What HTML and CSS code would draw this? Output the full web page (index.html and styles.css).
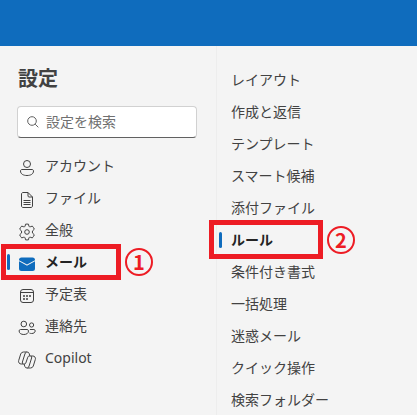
FILE: index.html
```html
<!DOCTYPE html>
<html lang="ja">
<head>
  <meta charset="UTF-8">
  <meta name="viewport" content="width=device-width, initial-scale=1">
  <title>設定</title>
  <link rel="stylesheet" href="styles.css">
</head>
<body>

  <header class="topbar"></header>

  <div class="settings">
    <aside class="sidebar">
      <h1>設定</h1>

      <label class="search">
        <svg viewBox="0 0 12 12" aria-hidden="true"><circle cx="5" cy="5" r="4.3"/><path d="M8.2 8.2 11.3 11.3"/></svg>
        <input type="search" placeholder="設定を検索" aria-label="設定を検索">
      </label>

      <nav class="menu">
        <a href="#account">
          <svg viewBox="0 0 20 20"><circle cx="10" cy="6" r="3.5"/><path d="M5 11.500h10c.9 0 1.500.6 1.500 1.500 0 3-2.800 4.500-6.500 4.500S3.500 16 3.500 13c0-.9.6-1.500 1.500-1.500z"/></svg>
          <span>アカウント</span>
        </a>
        <a href="#files">
          <svg viewBox="0 0 20 20"><path d="M6 2.500h5l4.500 4.500v9c0 .8-.7 1.500-1.500 1.500H6c-.8 0-1.500-.7-1.500-1.500V4c0-.8.7-1.500 1.500-1.500zM11 2.500V6c0 .6.4 1 1 1h3.500M6.500 10.500h7M6.500 12.500h7M6.500 14.500h7"/></svg>
          <span>ファイル</span>
        </a>
        <a href="#general">
          <svg viewBox="0 0 20 20"><path d="M8.500 2.200Q10 1.900 11.500 2.200L11.900 4.200Q12.300 5 13.200 4.800L15.300 4.100Q16.600 5.400 17.300 7.200L15.800 8.600Q14.700 10 15.800 11.400L17.300 12.800Q16.600 14.600 15.300 15.900L13.200 15.200Q12.300 15 11.900 15.800L11.500 17.800Q10 18.100 8.500 17.800L8.100 15.800Q7.700 15 6.800 15.200L4.700 15.900Q3.400 14.600 2.700 12.800L4.200 11.400Q5.300 10 4.200 8.600L2.700 7.200Q3.400 5.400 4.700 4.100L6.800 4.800Q7.700 5 8.100 4.200Z"/><circle cx="10" cy="10" r="2.300"/></svg>
          <span>全般</span>
        </a>
        <a href="#mail" class="active">
          <svg class="filled" viewBox="0 0 20 20"><path d="M2 7.300 9.700 11.600q.3.200.6 0L18 7.300V14.500a2.500 2.500 0 0 1-2.500 2.500h-11A2.500 2.500 0 0 1 2 14.500zM4.500 3.500h11A2.500 2.500 0 0 1 18 6v.2l-8 4.400L2 6.200V6a2.500 2.500 0 0 1 2.500-2.500z"/></svg>
          <span>メール</span>
          <span class="frame"></span>
          <span class="step">1</span>
        </a>
        <a href="#calendar">
          <svg viewBox="0 0 20 20"><rect x="3.500" y="3.500" width="13" height="13" rx="2.500"/><path d="M3.500 6.500h13"/><g class="dots"><circle cx="7" cy="10" r="1"/><circle cx="10" cy="10" r="1"/><circle cx="13" cy="10" r="1"/><circle cx="7" cy="13" r="1"/><circle cx="10" cy="13" r="1"/></g></svg>
          <span>予定表</span>
        </a>
        <a href="#people">
          <svg viewBox="0 0 20 20"><circle cx="6.800" cy="6" r="2.800"/><circle cx="14.600" cy="7" r="2.100"/><path d="M3.500 11.500h6.600c.8 0 1.400.6 1.400 1.400 0 2.400-2 3.600-4.700 3.600s-4.700-1.200-4.700-3.600c0-.8.6-1.400 1.400-1.400zM12.900 11.500h4c.7 0 1.300.6 1.300 1.300 0 1.800-1.500 2.700-3.600 2.700-.8 0-1.500-.1-2.100-.4"/></svg>
          <span>連絡先</span>
        </a>
        <a href="#copilot">
          <svg viewBox="0 0 20 20"><path d="M12.900 6 12.200 3.600A2.200 2.200 0 0 0 10 2H6.500A3 3 0 0 0 3.700 4L1.700 10.500A2.600 2.600 0 0 0 4.200 14H7.300q1.100 0 1.500-1L10.800 7.200Q11.200 6 12.200 6H15.800A2.600 2.600 0 0 1 18.300 9.500L16.300 16A3 3 0 0 1 13.500 18H10A2.200 2.200 0 0 1 7.800 16.400L7.100 14M9.500 2Q8.400 2.400 7.900 4L5.400 12Q5 13.400 6 14M10.500 18Q11.600 17.600 12.100 16L14.600 8Q15 6.600 14 6"/></svg>
          <span>Copilot</span>
        </a>
      </nav>
    </aside>

    <nav class="menu submenu">
      <a href="#layout">レイアウト</a>
      <a href="#compose">作成と返信</a>
      <a href="#templates">テンプレート</a>
      <a href="#suggestions">スマート候補</a>
      <a href="#attachments">添付ファイル</a>
      <a href="#rules" class="active">
        <span>ルール</span>
        <span class="frame"></span>
        <span class="step">2</span>
      </a>
      <a href="#formatting">条件付き書式</a>
      <a href="#sweep">一括処理</a>
      <a href="#junk">迷惑メール</a>
      <a href="#quicksteps">クイック操作</a>
      <a href="#folders">検索フォルダー</a>
    </nav>
  </div>

</body>
</html>
```
FILE: styles.css
```css
* {
  box-sizing: border-box;
}

body {
  display: flex;
  flex-direction: column;
  height: 100vh;
  margin: 0;
  overflow: hidden;
  background-color: #f4f4f4;
  color: #424242;
  font-family: "Noto Sans", "Noto Sans CJK JP", sans-serif;
  font-size: 14px;
  line-height: 20px;
}

.topbar {
  flex: none;
  height: 46px;
  background-color: #0f6cbd;
}

.settings {
  display: flex;
  flex: 1;
}

.sidebar {
  flex: none;
  width: 217px;
  border-right: 1px solid #ededed;
}

h1 {
  margin: 19px 18px 13px;
  font-size: 20px;
  line-height: 28px;
}

.search {
  display: flex;
  align-items: center;
  gap: 7px;
  height: 32px;
  margin: 0 19px 12px 17px;
  padding: 0 9px;
  background-color: #fff;
  border: 1px solid #d1d1d1;
  border-bottom-color: #616161;
  border-radius: 4px;
}

.search svg {
  flex: none;
  width: 12px;
  height: 12px;
  fill: none;
  stroke: #616161;
}

.search input {
  flex: 1;
  min-width: 0;
  padding: 0;
  border: none;
  outline: none;
  background: none;
  color: #424242;
  font: inherit;
}

.search input::placeholder {
  color: #707070;
}

.menu a {
  position: relative;
  display: flex;
  align-items: center;
  height: 32px;
  padding-left: 7px;
  color: #424242;
  text-decoration: none;
}

/* selection bar, transparent until the item is active */
.menu a::before {
  content: "";
  width: 3px;
  height: 16px;
  margin-right: 7px;
  border-radius: 2px;
}

.menu a.active {
  color: #242424;
  font-weight: bold;
}

.menu a.active::before {
  background-color: #0f6cbd;
}

.menu svg {
  width: 20px;
  height: 20px;
  margin: 4px 8px 0 0;
  fill: none;
  stroke: #424242;
}

.menu svg.filled {
  fill: #0f6cbd;
  stroke: none;
}

.menu .dots {
  fill: #424242;
  stroke: none;
}

.submenu {
  flex: 1;
  padding-top: 18px;
}

.submenu a {
  padding-left: 2px;
}

.submenu a::before {
  margin-right: 9px;
}

/* red callouts drawn over the menus */
.frame {
  position: absolute;
  top: -2px;
  left: 1px;
  width: 120px;
  height: 36px;
  border: 5px solid #ed1c24;
}

.step {
  position: absolute;
  top: 2px;
  left: 125px;
  width: 28px;
  height: 28px;
  border: 2px solid #ed1c24;
  border-radius: 50%;
  color: #ed1c24;
  font-family: "Noto Sans CJK JP", sans-serif;
  font-size: 20px;
  line-height: 24px;
  text-align: center;
}

.submenu .frame {
  top: -4px;
  left: -8px;
  width: 114px;
  height: 39px;
}

.submenu .step {
  left: 110px;
}
```
